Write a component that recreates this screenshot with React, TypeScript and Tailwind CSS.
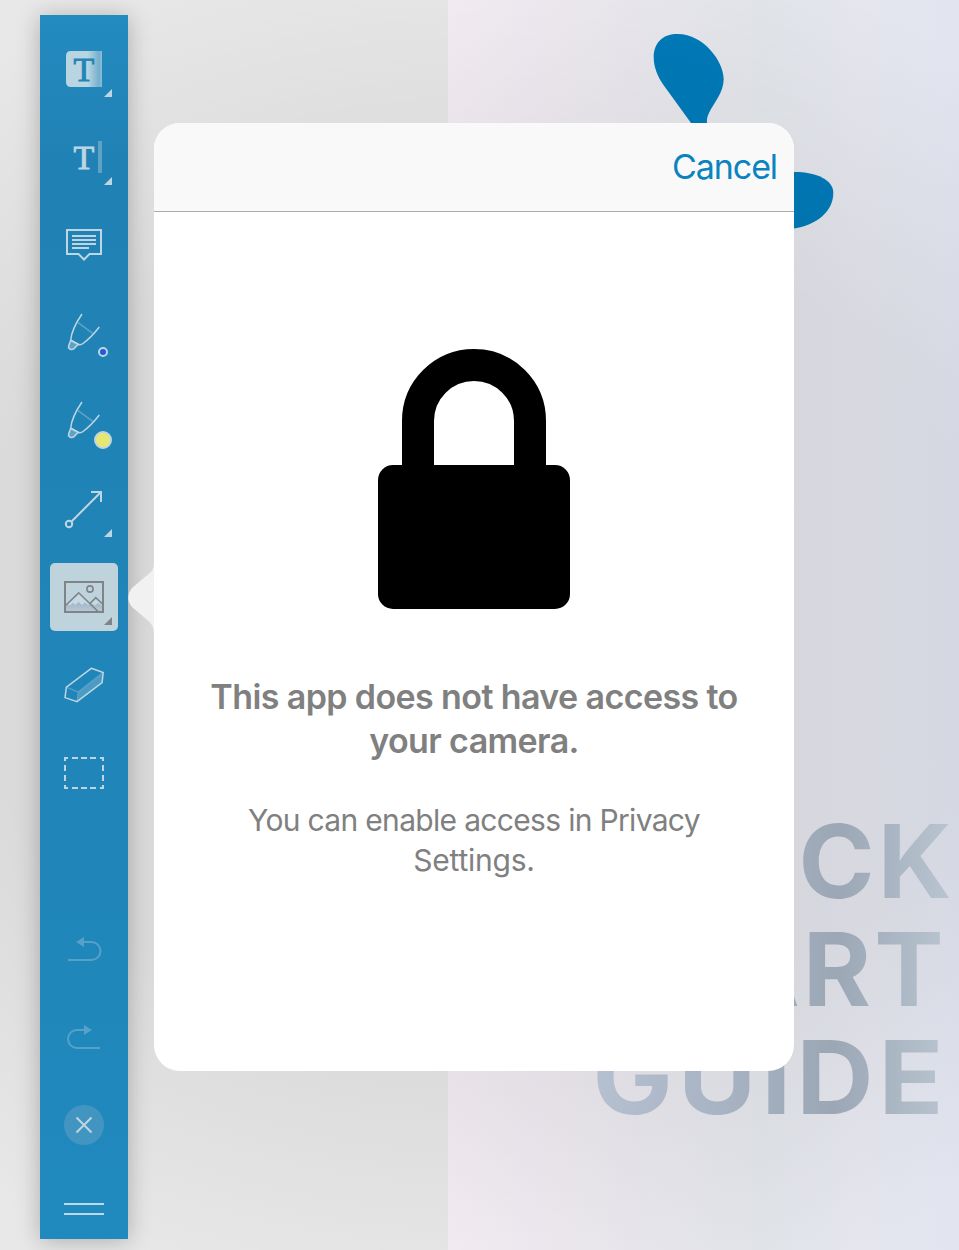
import type { ReactNode } from "react";

const PALE = "#bdd6e2";

function Icon({ children, corner, cornerColor = PALE }: { children: ReactNode; corner?: boolean; cornerColor?: string }) {
  return (
    <svg width="88" height="88" viewBox="0 0 88 88" fill="none" stroke={PALE} strokeWidth="2" className="block shrink-0">
      {children}
      {corner && <path d="M72 64v8h-8z" fill={cornerColor} stroke="none" />}
    </svg>
  );
}

function Tool({ label, children }: { label: string; children: ReactNode }) {
  return (
    <button aria-label={label} className="block size-[88px] shrink-0">
      {children}
    </button>
  );
}

function Marker({ color, radius }: { color: string; radius: number }) {
  return (
    <Icon>
      <path d="M30.7 51.2 38.3 55.3 34 59.6C31.5 61.6 27.6 59.8 28.8 56.5z" fill="#5ea3c5" strokeWidth="1.5" />
      <path d="M37.7 33.3 52.7 44.3" stroke="#5ea3c5" strokeWidth="1.5" />
      <path d="M42 25C36.5 33 31.5 42 30.7 51.2L38.3 55.3Q40.5 56.5 43 54.5C50 49.5 55 43.5 59.3 38" strokeWidth="1.5" />
      <circle cx="63" cy="63" r={radius} fill={color} />
    </Icon>
  );
}

function Toolbar() {
  return (
    <nav className="relative ml-10 mt-[15px] flex h-[1224px] w-[88px] flex-col bg-linear-to-b from-[#238bc0] via-[#2081b4] via-12% to-[#2089bd] pt-[10px] shadow-[0_2px_22px_rgba(0,0,0,0.25)]">
      <Tool label="Highlight text">
        <Icon corner>
          <defs>
            <linearGradient id="fade" x1="0" x2="1">
              <stop offset="0.6" stopColor="#bad5e2" />
              <stop offset="0.92" stopColor="#73afcd" />
              <stop offset="1" stopColor="#8dbfd8" />
            </linearGradient>
          </defs>
          <path d="M31 26H62V62H31Q26 62 26 57V31Q26 26 31 26z" fill="url(#fade)" stroke="none" />
          <text x="44" y="55.6" textAnchor="middle" fontFamily="Liberation Serif, serif" fontSize="34" fill="#2384b7" stroke="#2384b7" strokeWidth="0.9">T</text>
        </Icon>
      </Tool>
      <Tool label="Add text">
        <Icon corner>
          <text x="44" y="55.6" textAnchor="middle" fontFamily="Liberation Serif, serif" fontSize="34" fill="#bdd6e2" stroke="#bdd6e2" strokeWidth="0.9">T</text>
          <path d="M60 28V60" stroke="#5ea3c5" strokeWidth="4" />
        </Icon>
      </Tool>
      <Tool label="Comment">
        <Icon>
          <path d="M27 29H61V53H49.5L44 58.5 38.5 53H27zM32 35H56M32 39H56M32 43H56M32 47H49" />
        </Icon>
      </Tool>
      <Tool label="Pen">
        <Marker color="#2558e0" radius={4} />
      </Tool>
      <Tool label="Marker">
        <Marker color="#e6e873" radius={8} />
      </Tool>
      <Tool label="Arrow">
        <Icon corner>
          <circle cx="29" cy="59" r="3.2" />
          <path d="M31.3 56.7 61 27M51 27H61V37" />
        </Icon>
      </Tool>
      <Tool label="Image">
        <Icon corner cornerColor="#7e8487">
          <defs>
            <linearGradient id="haze" x1="0" x2="0" y1="0" y2="1">
              <stop offset="0" stopColor="#a3b5c5" />
              <stop offset="1" stopColor="#b9c8d7" />
            </linearGradient>
          </defs>
          <rect x="10" y="10" width="68" height="68" rx="5" fill="#bfd3dd" stroke="none" />
          <path d="M25 53 38.7 40 48 50 51 50 56 45 63 51V59H25z" fill="#c5dae5" stroke="none" />
          <path d="M25 54 28 51 30 52.5 33 49.5 35 52 38.5 49 42 52 45 49.5 48 52 52 50.5 55 52.5 58 50 63 53V59H25z" fill="url(#haze)" stroke="none" />
          <g stroke="#7e8487">
            <rect x="25" y="29" width="38" height="30" />
            <circle cx="50" cy="36" r="3.1" strokeWidth="1.6" />
            <path d="M25 53 38.7 39.8 58 58.5M50 50.5 55.8 44.6 63 51.5" strokeWidth="1.6" />
          </g>
        </Icon>
      </Tool>
      <Tool label="Eraser">
        <Icon>
          <path d="M38.3 51 63 31.5 62 41.5 37 60.7z" fill="#4c9bc4" stroke="none" />
          <path d="M26.3 46.3 38.3 51 63 31.5M38.3 51 37 61" stroke="#5ea3c5" strokeWidth="1.2" />
          <path d="M51.3 27.3 63.2 31.5 62.1 41.6 37 60.7 25 56.6 26.4 46.2z" strokeWidth="1.5" />
        </Icon>
      </Tool>
      <Tool label="Select area">
        <Icon>
          <path d="M25 32V29H28M32 29H38M41 29H47M50 29H56M60 29H63V32M63 36V42M63 46V52M63 56V59H60M56 59H50M47 59H41M38 59H32M28 59H25V56M25 52V46M25 42V36" />
        </Icon>
      </Tool>

      <div className="mt-[89px] h-[88px]">
        <Tool label="Undo">
          <svg width="88" height="88" viewBox="0 0 88 88" fill="none" stroke="#56a1c8" strokeWidth="2" className="block">
            <path d="M44 36H51.5A9 9 0 0 1 51.5 54H28" />
            <path d="M36 36 44 31V41z" fill="#56a1c8" stroke="none" />
          </svg>
        </Tool>
      </div>
      <div className="h-[87px]">
        <Tool label="Redo">
          <svg width="88" height="88" viewBox="0 0 88 88" fill="none" stroke="#56a1c8" strokeWidth="2" className="block">
            <path d="M44 36H37A9 9 0 0 0 37 54H60" />
            <path d="M52 36 44 31V41z" fill="#56a1c8" stroke="none" />
          </svg>
        </Tool>
      </div>
      <Tool label="Close">
        <Icon>
          <circle cx="44" cy="44" r="20" fill="#4295c1" stroke="none" />
          <path d="M36.5 36.5 51.5 51.5M51.5 36.5 36.5 51.5" />
        </Icon>
      </Tool>
      <div className="mt-[34px] flex flex-col items-center gap-2">
        <span className="h-0.5 w-10 bg-[#bdd9e7]" />
        <span className="h-0.5 w-10 bg-[#bdd9e7]" />
      </div>
    </nav>
  );
}

function CoverPage() {
  return (
    <section className="absolute inset-y-0 left-[448px] right-0 bg-[linear-gradient(to_right,#f5eef5_0%,#ece9ef_30%,#e2e5ea_62%,#e5e6ee_80%,#e2e5f0_100%)]">
      <svg width="511" height="260" viewBox="448 0 511 260" fill="#007ab8" className="block">
        <path d="M677.7 34C663 33.5 653.7 43 653.7 57.3C653.7 67 657.5 76.5 663.5 85L691 123V130H707V123C706.5 119 707.5 116 709 113C713.5 103 723.7 93 723.7 79C723.7 62 704 34 677.7 34z" />
        <path d="M780 173 794 172C817 172 833.3 180 833.3 193C833.3 211 817 225 794 228.5H780z" />
      </svg>
    </section>
  );
}

function CoverTitle() {
  return (
    <h1 className="absolute left-[560px] top-[807px] w-[399px] font-['Inter'] text-[102px]/[108px] font-bold text-transparent">
      <span className="block origin-right scale-x-[1.01] bg-linear-to-r from-[#bac4d7] from-10% via-[#9ca7b6] via-70% to-[#bcc7d3] bg-clip-text pr-[4px] text-right tracking-[3px]">QUICK</span>
      <span className="block origin-right scale-x-[1.02] bg-linear-to-r from-[#bac4d7] from-10% via-[#9ca7b6] via-70% to-[#bcc7d3] bg-clip-text pr-[12px] text-right tracking-[3px]">START</span>
      <span className="block origin-right scale-x-[1.05] bg-linear-to-r from-[#b6c1d2] from-10% via-[#9ca7b6] via-70% to-[#bcc7d3] bg-clip-text pr-[10px] text-right tracking-[4.7px]">GUIDE</span>
    </h1>
  );
}

function PermissionPopover() {
  return (
    <div role="dialog" className="absolute left-[154px] top-[123px] flex h-[948px] w-[640px] flex-col rounded-[26px] bg-white font-['Inter']">
      <svg width="26" height="80" viewBox="0 0 26 80" fill="#f1f1f1" className="absolute -left-[26px] top-[435px]">
        <path d="M26 4C26 13 22 15 17 19L4 30Q-3.5 40 4 49L17 60C22 64 26 67 26 77z" />
      </svg>
      <header className="flex h-[89px] shrink-0 items-center justify-end rounded-t-[26px] border-b border-[#acacac] bg-[#f9f9f9] pr-[17px] pb-0.5">
        <button className="text-[34px] tracking-[-1.1px] text-[#0a84c1]">Cancel</button>
      </header>
      <div className="flex flex-col items-center text-center text-[#808080]">
        <svg width="192" height="260" viewBox="0 0 192 260" className="mt-[137px] block">
          <path d="M40 130V72A56 56 0 0 1 152 72V130" fill="none" stroke="#000" strokeWidth="32" />
          <rect y="116" width="192" height="144" rx="15" />
        </svg>
        <h2 className="mt-[66px] w-[560px] text-[34px]/[44px] font-semibold tracking-[-0.6px]">
          This app does not have access to<br />your camera.
        </h2>
        <p className="mt-[37px] w-[560px] text-[30px]/[40px] tracking-[-0.68px]">
          You can enable access in Privacy<br /><span className="tracking-[-0.25px]">Settings.</span>
        </p>
      </div>
    </div>
  );
}

export default function App() {
  return (
    <main className="relative flex h-[1250px] w-[959px] items-start overflow-hidden bg-[#e8e8e8]">
      <CoverPage />
      <div className="absolute inset-0 bg-radial-[ellipse_90%_56%_at_50%_50%] from-black/6 from-60% to-transparent" />
      <CoverTitle />
      <Toolbar />
      <PermissionPopover />
    </main>
  );
}
